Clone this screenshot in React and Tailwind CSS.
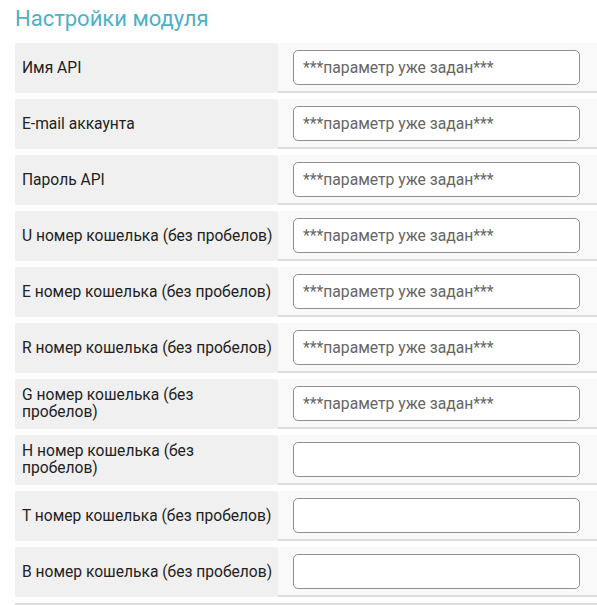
import React from "react";

const rows = [
  { label: "Имя API", value: "***параметр уже задан***" },
  { label: "E-mail аккаунта", value: "***параметр уже задан***" },
  { label: "Пароль API", value: "***параметр уже задан***" },
  { label: "U номер кошелька (без пробелов)", value: "***параметр уже задан***" },
  { label: "E номер кошелька (без пробелов)", value: "***параметр уже задан***" },
  { label: "R номер кошелька (без пробелов)", value: "***параметр уже задан***" },
  { label: "G номер кошелька (без пробелов)", value: "***параметр уже задан***", narrow: true },
  { label: "H номер кошелька (без пробелов)", value: "", narrow: true },
  { label: "T номер кошелька (без пробелов)", value: "" },
  { label: "B номер кошелька (без пробелов)", value: "" },
];

export default function App() {
  return (
    <div className="w-[597px] h-[605px] overflow-hidden bg-white font-['Roboto','Liberation_Sans',sans-serif]">
      {/* Title */}
      <h2 className="pl-[15px] pt-[4px] h-[43px] text-[22px] leading-[30px] text-[#4fb0c6]">
        Настройки модуля
      </h2>

      {/* Settings rows */}
      <div className="pl-[15px] flex flex-col gap-[6px]">
        {rows.map((row, i) => (
          <div key={i} className="flex h-[50px]">
            <div className="w-[263px] shrink-0 bg-[#f0f0f0] pl-[7px] pr-[4px] flex items-center text-[15.6px] leading-[17px] text-[#222]">
              <span className={row.narrow ? "max-w-[200px]" : ""}>{row.label}</span>
            </div>
            <div className="flex-1 bg-[#f9f9f9] border-b-2 border-[#dddddd] pl-[15px] pr-[17px] flex items-center h-[50px]">
              <input
                type="text"
                readOnly
                placeholder={row.value}
                className="w-full h-[35px] rounded-[5px] border border-[#8f8f8f] bg-white px-[9px] text-[15.7px] text-[#666] placeholder-[#666] outline-none"
              />
            </div>
          </div>
        ))}
        <div className="h-[2px] bg-[#dddddd]" />
      </div>
    </div>
  );
}
